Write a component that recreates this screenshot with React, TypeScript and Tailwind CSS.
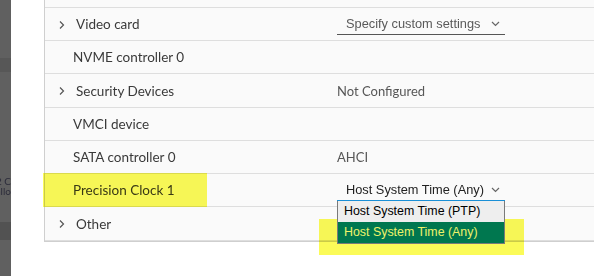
const rows = [
  { label: 'Video card', h: 'h-[32px]', expand: true, value: 'select', selectText: 'Specify custom settings' },
  { label: 'NVME controller 0', h: 'h-[32px]' },
  { label: 'Security Devices', h: 'h-[33px]', expand: true, value: 'Not Configured' },
  { label: 'VMCI device', h: 'h-[32px]' },
  { label: 'SATA controller 0', h: 'h-[32px]', value: 'AHCI' },
  { label: 'Precision Clock 1', h: 'h-[32px]', value: 'open', selectText: 'Host System Time (Any)' },
  { label: 'Other', h: 'h-[33px]', expand: true },
];

function Chevron() {
  return (
    <svg width="8" height="10" viewBox="0 0 8 10" className="shrink-0">
      <polyline points="2,1.5 5.5,5 2,8.5" fill="none" stroke="#555" strokeWidth="1.2" />
    </svg>
  );
}

function Caret({ color = '#666' }: { color?: string }) {
  return (
    <svg width="9" height="6" viewBox="0 0 9 6" className="shrink-0">
      <polyline points="1,1 4.5,4.5 8,1" fill="none" stroke={color} strokeWidth="1.2" />
    </svg>
  );
}

function Select({ text, open }: { text: string; open?: boolean }) {
  return (
    <div className="relative w-[168px]">
      <div
        className={
          'flex h-[22px] items-center justify-between pl-[9px] pr-[5px] border-b ' +
          (open ? 'border-[#1a8fd6] text-[#222]' : 'border-[#555] text-[#595959]')
        }
        style={{ fontFamily: '"Liberation Sans", Arial, sans-serif' }}
      >
        <span className="pt-[1px] text-[12.8px]">{text}</span>
        <Caret />
      </div>
      {open && (
        <div
          className="absolute left-0 top-full z-20 w-[168px] border-x border-b border-[#7a7a7a] text-[12.4px]"
          style={{ fontFamily: '"Liberation Sans", Arial, sans-serif' }}
        >
          <div className="flex h-[21px] items-center bg-[#eeeeee] pl-[6px] text-black">
            Host System Time (PTP)
          </div>
          <div className="flex h-[21px] items-center bg-[#00774f] pl-[6px] text-[#eef36a]">
            Host System Time (Any)
          </div>
        </div>
      )}
    </div>
  );
}

export default function App() {
  return (
    <div
      className="relative flex h-[276px] w-[594px] overflow-hidden bg-white"
      style={{ fontFamily: 'Lato, "Open Sans", sans-serif' }}
    >
      {/* dark window strip on the left */}
      <div className="flex w-[11px] shrink-0 flex-col overflow-hidden bg-[#606060]">
        <div className="h-[58px]" />
        <div className="h-[14px] bg-[#575757]" />
        <div className="h-[104px]" />
        <div className="flex flex-col items-end whitespace-nowrap text-[10px] leading-[10px] text-[#2c2c3a]">
          <div className="h-[10px]">2 C</div>
          <div className="h-[10px]">allo</div>
        </div>
        <div className="h-[26px]" />
        <div className="h-[18px] bg-[#525252]" />
        <div className="flex-1" />
      </div>

      <div className="w-[33px] shrink-0" />

      <div className="flex h-[242px] flex-1 flex-col border-l border-b border-[#cfcfcf] bg-[#fafafa]">
        <div className="h-[8px] border-b border-[#dedede]" />
        {rows.map((r) => (
          <div key={r.label} className={'flex items-center border-b border-[#dedede] box-content ' + r.h}>
            <div className="flex w-[292px] items-center pt-[1px] text-[13.5px] text-[#3a3a3a]">
              {r.expand ? (
                <div className="flex items-center pl-[13px]">
                  <Chevron />
                  <span className="ml-[10px]">{r.label}</span>
                </div>
              ) : (
                <span className="pl-[28px]">{r.label}</span>
              )}
            </div>
            <div className="flex items-center text-[13px] text-[#575757]">
              {r.value === 'select' && <Select text={r.selectText!} />}
              {r.value === 'open' && <Select text={r.selectText!} open />}
              {r.value && r.value !== 'select' && r.value !== 'open' && (
                <span className="pt-[2px]">{r.value}</span>
              )}
            </div>
          </div>
        ))}
      </div>

      {/* highlighter marks */}
      <div className="pointer-events-none absolute left-[43px] top-[173px] z-10 h-[34px] w-[164px] bg-[#fbfb58] mix-blend-multiply" />
      <div className="pointer-events-none absolute left-[319px] top-[219px] z-10 h-[36px] w-[205px] bg-[#fbfb58] mix-blend-multiply" />
    </div>
  );
}
